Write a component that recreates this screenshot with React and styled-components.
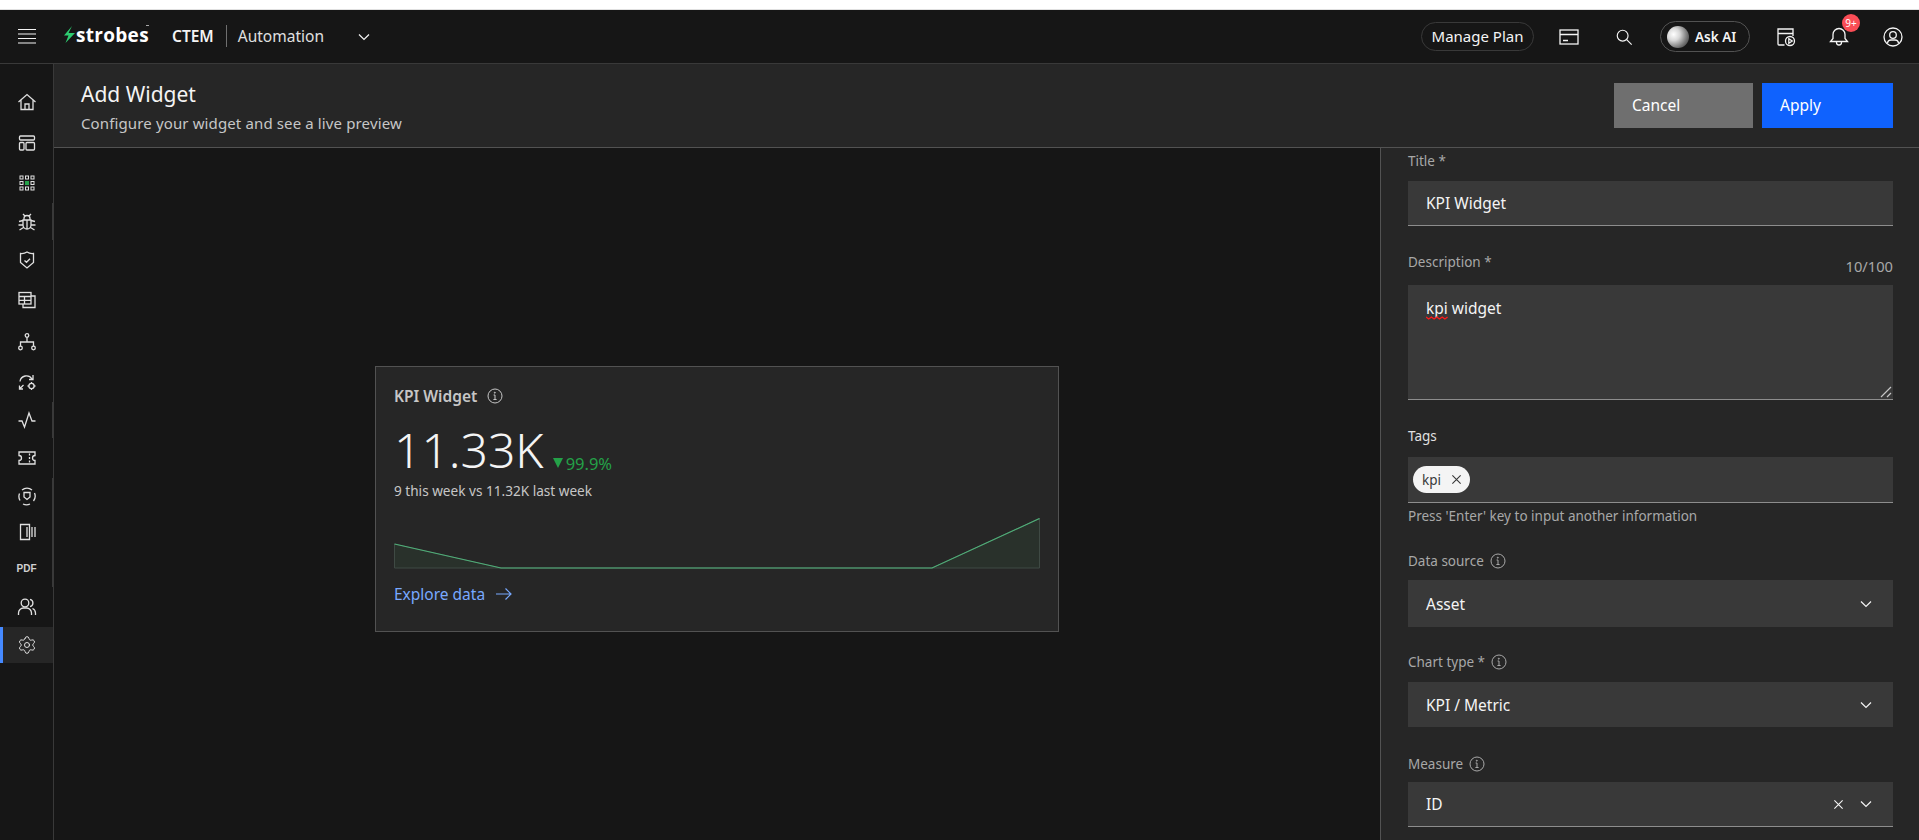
import React from "react";
import styled, { createGlobalStyle } from "styled-components";
import { Settings } from "lucide-react";

const GlobalStyle = createGlobalStyle`
  html, body {
    margin: 0;
    padding: 0;
    background: #fff;
    overflow: hidden;
  }
  * {
    box-sizing: border-box;
  }
`;

const Page = styled.div`
  width: 1919px;
  height: 840px;
  display: flex;
  flex-direction: column;
  overflow: hidden;
  font-family: "Noto Sans", "Open Sans", sans-serif;
  color: #f4f4f4;
  background: #161616;
`;

const BrowserStrip = styled.div`
  height: 10px;
  background: #fff;
  border-top: 8px solid #fff;
  border-bottom: 1px solid #e0e0e0;
  flex: none;
`;

const TopBar = styled.header`
  height: 54px;
  flex: none;
  display: flex;
  align-items: center;
  background: #161616;
  border-bottom: 1px solid #393939;
`;

const MenuButton = styled.div`
  width: 54px;
  display: flex;
  justify-content: center;
`;

const Logo = styled.div`
  display: flex;
  align-items: center;
  margin-left: 10px;
  width: 108px;
  position: relative;
  top: -2px;
`;

const LogoText = styled.span`
  font-family: "Open Sans", sans-serif;
  font-weight: 700;
  font-size: 19px;
  letter-spacing: 0.3px;
  line-height: 20px;
  color: #fff;
  margin-left: 1px;
`;

const LogoMark = styled.span`
  position: absolute;
  left: 82px;
  top: 0;
  width: 3px;
  height: 1px;
  background: #a8a8a8;
`;

const Product = styled.span`
  font-size: 15.5px;
  font-weight: 600;
  color: #f4f4f4;
  margin-top: -2px;
`;

const Divider = styled.span`
  width: 1px;
  height: 22px;
  background: #6f6f6f;
  margin: -2px 11px 0 12px;
`;

const Section = styled.span`
  font-size: 15.5px;
  color: #e0e0e0;
  width: 119px;
  margin-top: -2px;
`;

const TopActions = styled.div`
  margin-left: auto;
  display: flex;
  align-items: center;
  color: #f4f4f4;
`;

const PlanPill = styled.div`
  height: 29px;
  width: 113px;
  display: flex;
  align-items: center;
  justify-content: center;
  padding-bottom: 2px;
  border: 1px solid #393939;
  border-radius: 15px;
  font-size: 15px;
  color: #f4f4f4;
`;

const IconSlot = styled.div`
  position: relative;
  display: flex;
  justify-content: center;
  align-items: center;
  width: ${(p) => p.$w}px;
  margin-left: ${(p) => p.$ml || 0}px;
`;

const AskPill = styled.div`
  height: 31px;
  width: 90px;
  display: flex;
  align-items: center;
  padding-left: 6px;
  gap: 6px;
  border: 1px solid #525252;
  border-radius: 16px;
  font-size: 13.5px;
  font-weight: 600;
  line-height: 18px;
  color: #f4f4f4;
`;

const Orb = styled.span`
  width: 22px;
  height: 22px;
  border-radius: 50%;
  background: radial-gradient(circle at 30% 38%, #fff 0%, #d8d8d8 30%, #6f6f6f 68%, #262626 100%);
`;

const Badge = styled.span`
  position: absolute;
  top: -13px;
  left: 13px;
  width: 18px;
  height: 18px;
  border-radius: 50%;
  background: #fa4d56;
  color: #fff;
  font-size: 10px;
  line-height: 18px;
  text-align: center;
`;

const Body = styled.div`
  flex: 1;
  display: flex;
  min-height: 0;
`;

const SideNav = styled.nav`
  position: relative;
  width: 54px;
  flex: none;
  display: flex;
  flex-direction: column;
  padding-top: 20px;
  background: #161616;
  border-right: 1px solid #393939;

  /* scrollbar thumbs that sit on top of the nav edge */
  &::after {
    content: "";
    position: absolute;
    top: 0;
    right: 0;
    width: 1px;
    height: 100%;
    background: linear-gradient(
      to bottom,
      transparent 139px,
      #393939 139px,
      #393939 176px,
      transparent 176px,
      transparent 338px,
      #393939 338px,
      #393939 374px,
      transparent 374px,
      transparent 414px,
      #393939 414px,
      #393939 523px,
      transparent 523px
    );
  }
`;

const NavItem = styled.div`
  height: 36px;
  flex: none;
  margin-top: ${(p) => p.$gap}px;
  display: flex;
  align-items: center;
  justify-content: center;
  color: #e0e0e0;
  background: ${(p) => (p.$active ? "#262626" : "transparent")};
  border-left: 3px solid ${(p) => (p.$active ? "#4589ff" : "transparent")};
  padding-right: 3px;
`;

const PdfLabel = styled.span`
  font-family: "Liberation Sans", sans-serif;
  font-size: 10px;
  font-weight: 700;
  color: #d0d0d0;
`;

const Content = styled.main`
  flex: 1;
  min-width: 0;
  display: flex;
  flex-direction: column;
`;

const PageHeader = styled.div`
  height: 84px;
  flex: none;
  display: flex;
  justify-content: space-between;
  background: #262626;
  border-bottom: 1px solid #525252;
  padding: 19px 26px 0 27px;
`;

const PageTitle = styled.h1`
  margin: -1px 0 0;
  font-size: 21px;
  font-weight: 400;
  line-height: 24px;
  color: #f4f4f4;
`;

const PageSub = styled.p`
  margin: 7px 0 0;
  font-size: 15px;
  letter-spacing: 0.13px;
  line-height: 20px;
  color: #c6c6c6;
`;

const HeaderButtons = styled.div`
  display: flex;
  gap: 9px;
`;

const ActionButton = styled.button`
  width: ${(p) => p.$w}px;
  height: 45px;
  border: none;
  padding: 0 0 2px 18px;
  text-align: left;
  font: inherit;
  font-size: 15.5px;
  color: #fff;
  background: ${(p) => (p.$primary ? "#0f62fe" : "#6f6f6f")};
`;

const Workspace = styled.div`
  flex: 1;
  min-height: 0;
  display: flex;
`;

const Preview = styled.section`
  flex: 1;
  min-width: 0;
  display: flex;
  padding: 218px 0 0 321px;
  background: #161616;
`;

const KpiCard = styled.div`
  width: 684px;
  height: 266px;
  background: #262626;
  border: 1px solid #525252;
  padding: 19px 18px 0;
`;

const CardTitleRow = styled.div`
  display: flex;
  align-items: center;
  gap: 10px;
  height: 20px;
  font-size: 15.5px;
  font-weight: 600;
  color: #c6c6c6;
`;

const ValueRow = styled.div`
  display: flex;
  align-items: baseline;
  gap: 9px;
  margin-top: 16px;
`;

const BigValue = styled.span`
  font-size: 48px;
  font-weight: 300;
  line-height: 56px;
  color: #f4f4f4;
`;

const Delta = styled.span`
  display: flex;
  align-items: center;
  gap: 3px;
  font-size: 16.5px;
  color: #24a148;
`;

const CardNote = styled.div`
  margin-top: 4px;
  font-size: 13.6px;
  line-height: 18px;
  color: #c6c6c6;
`;

const SparkWrap = styled.div`
  margin-top: 18px;
  height: 52px;
`;

const ExploreLink = styled.div`
  display: flex;
  align-items: center;
  gap: 10px;
  margin-top: 13px;
  font-size: 15.5px;
  color: #78a9ff;
`;

const ConfigPanel = styled.aside`
  width: 539px;
  flex: none;
  background: #262626;
  border-left: 1px solid #525252;
  padding: 3px 26px 0 27px;
  overflow: hidden;
`;

const LabelRow = styled.div`
  display: flex;
  align-items: center;
  justify-content: space-between;
  height: 20px;
  margin-top: ${(p) => p.$mt || 0}px;
  margin-bottom: ${(p) => p.$mb || 10}px;
`;

const Label = styled.label`
  display: flex;
  align-items: center;
  gap: 6px;
  font-size: 13.5px;
  color: ${(p) => (p.$bright ? "#e0e0e0" : "#a8a8a8")};
`;

const Counter = styled.span`
  font-size: 14.7px;
  color: #a8a8a8;
  position: relative;
  top: 4px;
`;

const InputBox = styled.div`
  height: ${(p) => p.$h || 45}px;
  display: flex;
  align-items: center;
  padding: 0 18px;
  background: #393939;
  font-size: 15.5px;
  color: #f4f4f4;
  border-bottom: ${(p) => (p.$plain ? "none" : "1px solid #8d8d8d")};
`;

const TextAreaBox = styled(InputBox)`
  position: relative;
  align-items: flex-start;
  padding-top: 12px;
`;

const Misspelled = styled.span`
  position: relative;
  display: inline-block;
`;

const Squiggle = styled.svg`
  position: absolute;
  left: 0;
  bottom: -1px;
`;

const Grip = styled.svg`
  position: absolute;
  right: 1px;
  bottom: 1px;
`;

const TagBox = styled(InputBox)`
  padding: 0 5px;
`;

const TagChip = styled.span`
  display: flex;
  align-items: center;
  gap: 10px;
  height: 27px;
  padding: 0 8px 0 9px;
  border-radius: 14px;
  background: #f4f4f4;
  color: #393939;
  font-size: 13.5px;
`;

const Helper = styled.div`
  margin-top: 4px;
  font-size: 13.5px;
  line-height: 18px;
  color: #a8a8a8;
`;

const SelectValue = styled.span`
  flex: 1;
`;

const SelectIcons = styled.span`
  display: flex;
  align-items: center;
  gap: 15px;
  margin-right: 2px;
`;

const stroke = { fill: "none", stroke: "currentColor", strokeWidth: 1.3 };

const Svg = ({ children, size = 20, vb = 20 }) => (
  <svg width={size} height={size} viewBox={`0 0 ${vb} ${vb}`} {...stroke}>
    {children}
  </svg>
);

const Chevron = ({ size = 14 }) => (
  <svg width={size} height={size} viewBox="0 0 14 14" fill="none" stroke="#f4f4f4" strokeWidth="1.2">
    <path d="M2 4.5 7 9.5 12 4.5" />
  </svg>
);

const CloseX = ({ size = 12, color = "#f4f4f4" }) => (
  <svg width={size} height={size} viewBox="0 0 12 12" fill="none" stroke={color} strokeWidth="1.2">
    <path d="M1.5 1.5 10.5 10.5M10.5 1.5 1.5 10.5" />
  </svg>
);

const InfoIcon = ({ color = "#c6c6c6" }) => (
  <svg width="16" height="16" viewBox="0 0 16 16" fill="none" stroke={color} strokeWidth="1">
    <circle cx="8" cy="8" r="7" />
    <path d="M6.4 11.5h3.2M8 11.5V7H6.6" />
    <circle cx="7.8" cy="4.7" r=".5" fill={color} />
  </svg>
);

const GRID_POS = [3, 8.5, 14];

const navIcons = [
  <Svg key="home">
    <path d="M1.5 10 10 2.5l8.5 7.500M4 8v9.500h12V8M8 17.500V12h4v5.500" />
  </Svg>,
  <Svg key="layout">
    <rect x="2.500" y="3" width="15" height="4" rx="1" />
    <rect x="2.500" y="9.500" width="4.500" height="7.500" rx="1" />
    <rect x="9" y="9.500" width="8.500" height="7.500" rx="1" />
  </Svg>,
  <svg key="grid" width="20" height="20" viewBox="0 0 20 20" fill="none" stroke="currentColor" strokeWidth="1">
    {GRID_POS.map((y) =>
      GRID_POS.map((x) => {
        const mid = x === 8.5 && y === 8.5;
        return (
          <rect
            key={`${x}-${y}`}
            x={x}
            y={y}
            width="3"
            height="3"
            stroke={mid ? "#24a148" : "currentColor"}
            fill={mid ? "#24a148" : "none"}
          />
        );
      })
    )}
  </svg>,
  <Svg key="bug">
    <path d="M6 8h8v5a4 4 0 0 1-8 0zM7 8V6.500a3 3 0 0 1 6 0V8M10 8v9M2 9.500 6 8.500M18 9.500l-4-1M1.500 13H6M18.500 13H14M2.500 18l4-2.500M17.500 18l-4-2.500M6 2l2 2M14 2l-2 2" />
  </Svg>,
  <Svg key="shield">
    <path d="M3.500 3.500Q7 4 10 2q3 2 6.500 1.500v9L10 18l-6.500-5.500zM7.500 10.500l2 1.800 3.500-3.500" />
  </Svg>,
  <Svg key="tables">
    <rect x="2" y="2.500" width="12" height="11.500" />
    <path d="M2 6.500h12M2 10.300h12M7.500 6.500V14M6 14v3.500h12V6h-4" />
  </Svg>,
  <Svg key="tree">
    <circle cx="10" cy="3.500" r="1.800" />
    <circle cx="3.500" cy="16" r="1.800" />
    <circle cx="16.500" cy="16" r="1.800" />
    <path d="M10 5.300V10M3.500 14.200V10h13v4.200" />
  </Svg>,
  <Svg key="sync">
    <path d="M3 9.500a6.500 6.500 0 0 1 12-2.500M16 3v4.500h-4M2.500 17l4-4M2.500 13.500V17H6" />
    <circle cx="14.500" cy="14" r="2.600" />
    <path d="M14.500 10v1.400M14.500 16.600V18M10.500 14h1.400M17.100 14h1.400" />
  </Svg>,
  <Svg key="pulse">
    <path d="M1.500 11H5l2.500 6L12 3l3 8h3.500" />
  </Svg>,
  <Svg key="ticket">
    <path d="M2 4h16v3.500a2.500 2.500 0 0 0 0 5V16H2v-3.500a2.500 2.500 0 0 0 0-5zM12.500 5.500v2M12.500 9v2M12.500 12.500v2" />
  </Svg>,
  <Svg key="scan">
    <path d="M5 4a8 8 0 0 1 10 0M17.500 7a8 8 0 0 1-1 8M13 18a8 8 0 0 1-7 0M3 14.500a8 8 0 0 1-.5-7" />
    <path d="M7 6.500h6v4.500l-3 2.500-3-2.500z" />
  </Svg>,
  <Svg key="columns">
    <path d="M12.500 2.500h-9v15h9z" />
    <path d="M15 5v10M18 5v10M10 5v10" />
  </Svg>,
  <PdfLabel key="pdf">PDF</PdfLabel>,
  <Svg key="users">
    <circle cx="8" cy="6" r="3.800" />
    <path d="M1.500 18v-2a5 5 0 0 1 5-5h3a5 5 0 0 1 5 5v2M13 2.300a3.800 3.800 0 0 1 0 7.400M15.500 11.500a5 5 0 0 1 3 4.500v2" />
  </Svg>,
  <Settings key="gear" size={20} strokeWidth={1.2} />,
];

const NAV_GAPS = [0, 5, 4, 3, 2, 4, 6, 4, 2, 2, 2, 0, 0, 3, 2];

const SPARK_W = 646;
const SPARK_H = 52;

const Sparkline = () => (
  <svg width={SPARK_W} height={SPARK_H} viewBox={`0 0 ${SPARK_W} ${SPARK_H}`}>
    <path d="M.5 26 107 50H538L645.500 .5V50H.5Z" fill="#2c3a30" fillOpacity=".55" stroke="#3f4a44" strokeWidth="1" />
    <path d="M.5 26 107 50H538L645.500 .5" fill="none" stroke="#4fae78" strokeWidth="1.200" />
  </svg>
);

export default function App() {
  return (
    <>
      <GlobalStyle />
      <Page>
        <BrowserStrip />
        <TopBar>
          <MenuButton>
            <svg width="18" height="15" viewBox="0 0 18 15" stroke="#f4f4f4" strokeWidth="1">
              <path d="M0 .5h18M0 5h18M0 9.500h18M0 14h18" />
            </svg>
          </MenuButton>
          <Logo>
            <svg width="11" height="17" viewBox="0 0 11 17">
              <path d="M8 0 4.500 7H11L1.500 17l3-7.500H0z" fill="#2ecc71" />
            </svg>
            <LogoText>strobes</LogoText>
            <LogoMark />
          </Logo>
          <Product>CTEM</Product>
          <Divider />
          <Section>Automation</Section>
          <Chevron />
          <TopActions>
            <PlanPill>Manage Plan</PlanPill>
            <IconSlot $w={20} $ml={25}>
              <Svg>
                <rect x="1" y="3" width="18" height="14" />
                <path d="M1 7.500h18M4 13.500h5" />
              </Svg>
            </IconSlot>
            <IconSlot $w={20} $ml={35}>
              <Svg size={18}>
                <circle cx="8.500" cy="8.500" r="6" />
                <path d="M13 13l5.500 5.500" />
              </Svg>
            </IconSlot>
            <IconSlot $w={90} $ml={26}>
              <AskPill>
                <Orb />
                Ask AI
              </AskPill>
            </IconSlot>
            <IconSlot $w={20} $ml={26}>
              <Svg>
                <path d="M8.500 18H3a1 1 0 0 1-1-1V2h15v7M2 6.500h15" />
                <circle cx="14" cy="14" r="4.500" />
                <path d="M12.800 11.800v4.400l3.400-2.200z" />
              </Svg>
            </IconSlot>
            <IconSlot $w={20} $ml={33}>
              <Svg>
                <path d="M10 1.500a6 6 0 0 1 6 6v4l2.500 3h-17l2.500-3v-4a6 6 0 0 1 6-6zM7.500 14.500v1a2.500 2.500 0 0 0 5 0v-1" />
              </Svg>
              <Badge>9+</Badge>
            </IconSlot>
            <IconSlot $w={20} $ml={34}>
              <Svg>
                <circle cx="10" cy="10" r="9" />
                <circle cx="10" cy="8" r="3.300" />
                <path d="M4.500 16.500v-.5a3.500 3.500 0 0 1 3.500-3h4a3.500 3.500 0 0 1 3.500 3v.5" />
              </Svg>
            </IconSlot>
            <IconSlot $w={16} />
          </TopActions>
        </TopBar>
        <Body>
          <SideNav>
            {navIcons.map((icon, i) => (
              <NavItem key={i} $gap={NAV_GAPS[i]} $active={i === navIcons.length - 1}>
                {icon}
              </NavItem>
            ))}
          </SideNav>
          <Content>
            <PageHeader>
              <div>
                <PageTitle>Add Widget</PageTitle>
                <PageSub>Configure your widget and see a live preview</PageSub>
              </div>
              <HeaderButtons>
                <ActionButton $w={139}>Cancel</ActionButton>
                <ActionButton $w={131} $primary>
                  Apply
                </ActionButton>
              </HeaderButtons>
            </PageHeader>
            <Workspace>
              <Preview>
                <KpiCard>
                  <CardTitleRow>
                    KPI Widget
                    <InfoIcon />
                  </CardTitleRow>
                  <ValueRow>
                    <BigValue>11.33K</BigValue>
                    <Delta>
                      <svg width="10" height="10" viewBox="0 0 10 10" fill="#24a148">
                        <path d="M0 0h10L5 10z" />
                      </svg>
                      99.9%
                    </Delta>
                  </ValueRow>
                  <CardNote>9 this week vs 11.32K last week</CardNote>
                  <SparkWrap>
                    <Sparkline />
                  </SparkWrap>
                  <ExploreLink>
                    Explore data
                    <svg width="18" height="14" viewBox="0 0 18 14" fill="none" stroke="#78a9ff" strokeWidth="1.200">
                      <path d="M1 7h15M10.500 1.500 16 7l-5.500 5.500" />
                    </svg>
                  </ExploreLink>
                </KpiCard>
              </Preview>
              <ConfigPanel>
                <LabelRow>
                  <Label>Title *</Label>
                </LabelRow>
                <InputBox>KPI Widget</InputBox>
                <LabelRow $mt={26} $mb={13}>
                  <Label>Description *</Label>
                  <Counter>10/100</Counter>
                </LabelRow>
                <TextAreaBox $h={115}>
                  <span>
                    <Misspelled>
                      kpi
                      <Squiggle width="22" height="4" viewBox="0 0 22 4" fill="none" stroke="#ff1a1a" strokeWidth="1.400">
                        <path d="M0 1 2.700 3 5.400 1 8.100 3 10.800 1 13.500 3 16.200 1 18.900 3 21.600 1" />
                      </Squiggle>
                    </Misspelled>{" "}
                    widget
                  </span>
                  <Grip width="12" height="12" viewBox="0 0 12 12" stroke="#c6c6c6" strokeWidth="1.200">
                    <path d="M1 11 11 1M7 11l4-4" />
                  </Grip>
                </TextAreaBox>
                <LabelRow $mt={26} $mb={11}>
                  <Label $bright>Tags</Label>
                </LabelRow>
                <TagBox $h={46}>
                  <TagChip>
                    kpi
                    <CloseX size={11} color="#393939" />
                  </TagChip>
                </TagBox>
                <Helper>Press 'Enter' key to input another information</Helper>
                <LabelRow $mt={26} $mb={9}>
                  <Label>
                    Data source <InfoIcon color="#a8a8a8" />
                  </Label>
                </LabelRow>
                <InputBox $h={47} $plain>
                  <SelectValue>Asset</SelectValue>
                  <SelectIcons>
                    <Chevron />
                  </SelectIcons>
                </InputBox>
                <LabelRow $mt={25} $mb={10}>
                  <Label>
                    Chart type * <InfoIcon color="#a8a8a8" />
                  </Label>
                </LabelRow>
                <InputBox $plain>
                  <SelectValue>KPI / Metric</SelectValue>
                  <SelectIcons>
                    <Chevron />
                  </SelectIcons>
                </InputBox>
                <LabelRow $mt={27} $mb={8}>
                  <Label>
                    Measure <InfoIcon color="#a8a8a8" />
                  </Label>
                </LabelRow>
                <InputBox>
                  <SelectValue>ID</SelectValue>
                  <SelectIcons>
                    <CloseX size={11} />
                    <Chevron />
                  </SelectIcons>
                </InputBox>
              </ConfigPanel>
            </Workspace>
          </Content>
        </Body>
      </Page>
    </>
  );
}
